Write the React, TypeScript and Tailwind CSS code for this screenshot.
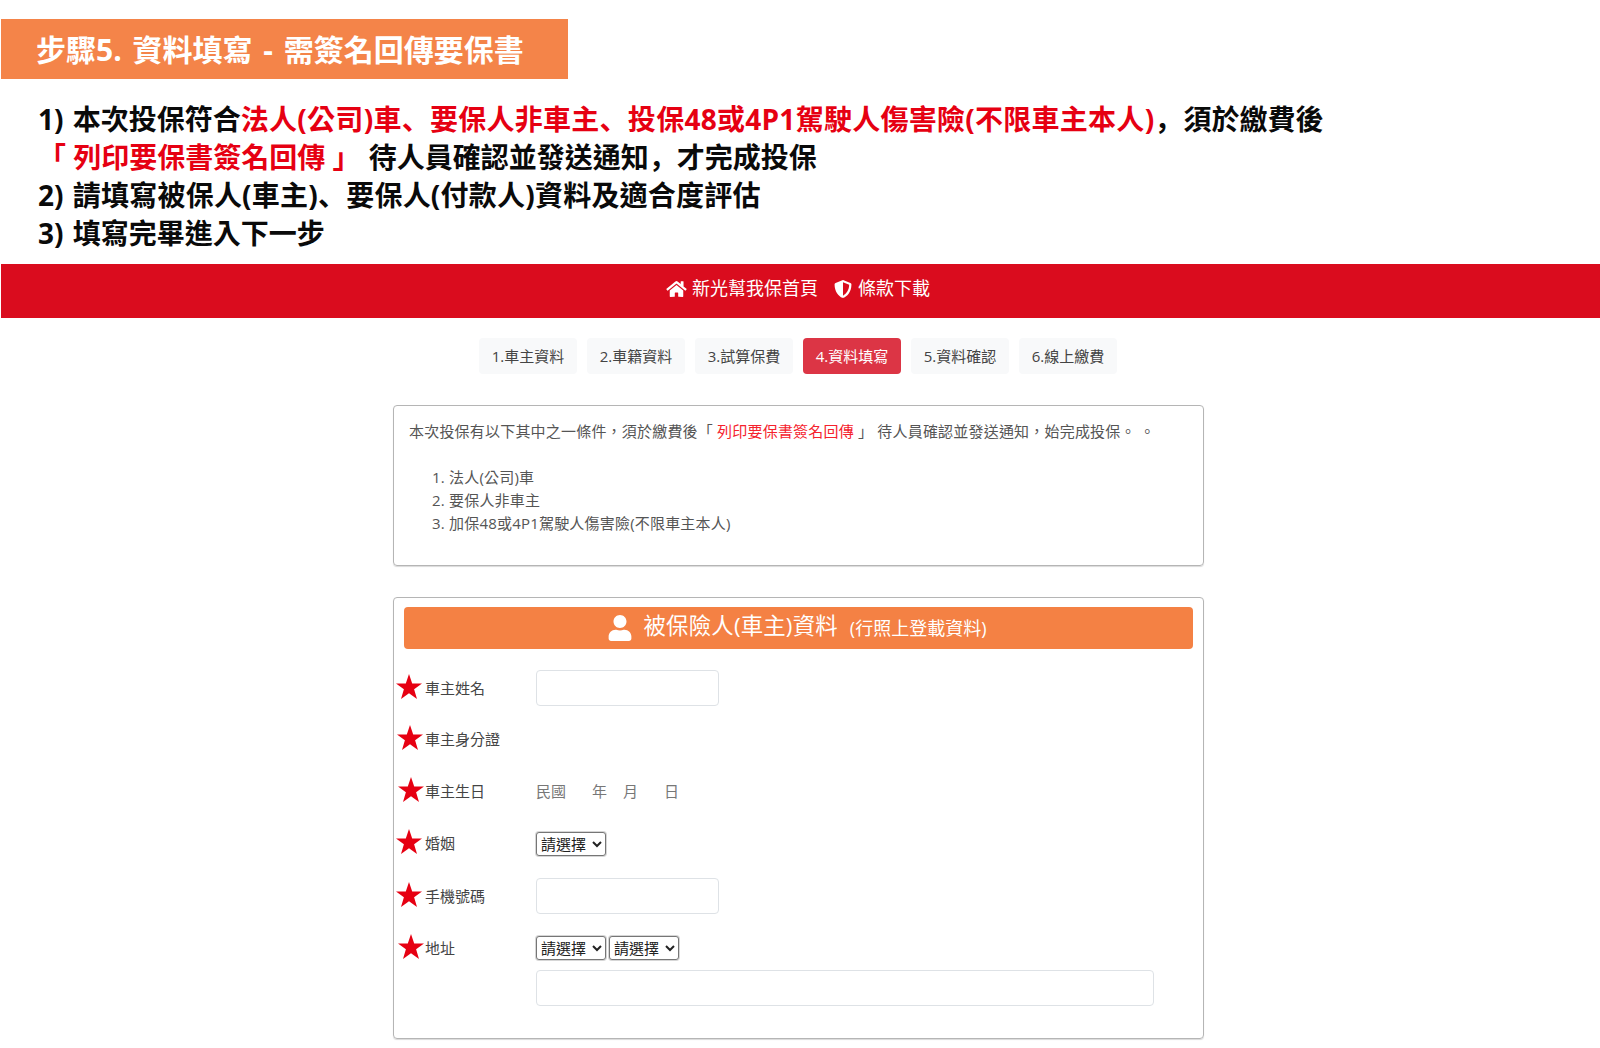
import React from 'react';
import { FaHome, FaShieldAlt, FaUser } from 'react-icons/fa';

const fontStack = 'font-["Open_Sans","Noto_Sans_CJK_TC",sans-serif]';

const tabs = ['1.車主資料', '2.車籍資料', '3.試算保費', '4.資料填寫', '5.資料確認', '6.線上繳費'];

// bottom-left punctuation, as in the headline of the reference
const Punct = ({ children }: { children: React.ReactNode }) => (
  <span className='font-["Noto_Sans_CJK_SC"]'>{children}</span>
);

const Star = ({ className = '' }: { className?: string }) => (
  <svg viewBox="0 0 26 25" className={`h-[25px] w-[26px] ${className}`}>
    <path d="M13 0 L16.2 9.4 L26 9.5 L18.1 15.3 L21 25 L13 19.2 L5 25 L7.9 15.3 L0 9.5 L9.8 9.4 Z" fill="#e60012" />
  </svg>
);

const Row = ({ label, height, starClass, children }: { label: string; height: string; starClass?: string; children?: React.ReactNode }) => (
  <div className={`flex items-center ${height}`}>
    <div className="flex w-[140px] items-center">
      <div className="w-[29px]">
        <Star className={`-translate-y-[2px] ${starClass ?? ''}`} />
      </div>
      <span>{label}</span>
    </div>
    {children}
  </div>
);

const TextInput = ({ className = 'w-[183px]' }: { className?: string }) => (
  <input type="text" className={`h-[36px] rounded border border-[#dee2e6] bg-white ${className}`} />
);

const AreaSelect = () => (
  <select className="h-[24px] w-[70px] rounded-[3px] border border-[#767676] bg-white text-[15px] text-[#222] shadow-[0_0_0_1px_rgba(118,118,118,0.3)]">
    <option>請選擇</option>
  </select>
);

export default function App() {
  return (
    <div className={`min-h-[1048px] bg-white pl-px pt-[19px] ${fontStack}`}>
      <div className="flex h-[60px] w-[567px] items-center bg-[#f48449] pl-[35px] text-[30px] font-bold text-white [word-spacing:3px]">
        步驟5. 資料填寫 - 需簽名回傳要保書
      </div>

      <div className="mt-[20px] pl-[37px] text-[28px] font-bold leading-[38px] text-[#0a0a0a]">
        <p className="h-[38px]">
          <span className="mr-[2px]">1) </span>本次投保符合
          <span className="tracking-[0.27px] text-[#e60012]">
            法人(公司)車<Punct>、</Punct>要保人非車主<Punct>、</Punct>投保48或4P1駕駛人傷害險(不限車主本人)
          </span>
          <Punct>，</Punct>
          <span className="ml-px">須於繳費後</span>
        </p>
        <p className="h-[38px]">
          <span className="text-[#e60012]">「 列印要保書簽名回傳 」</span>
          <span className="ml-px"> 待人員確認並發送通知</span>
          <Punct>，</Punct>才完成投保
        </p>
        <p className="h-[38px]">
          <span className="mr-[2px]">2) </span>
          <span className="tracking-[0.22px]">
            請填寫被保人(車主)<Punct>、</Punct>要保人(付款人)資料及適合度評估
          </span>
        </p>
        <p className="h-[38px] pt-px">
          <span className="mr-[2px]">3) </span>填寫完畢進入下一步
        </p>
      </div>

      <nav className="mt-[13px] flex h-[54px] items-center justify-center gap-[16px] bg-[#da0c1e] pb-[5px] pr-[5px] text-[18px] text-white">
        <a className="flex items-center gap-[5px]">
          <FaHome className="h-[18px] w-[21px]" />
          新光幫我保首頁
        </a>
        <a className="flex items-center gap-[6px]">
          <FaShieldAlt className="h-[18px] w-[18px]" />
          條款下載
        </a>
      </nav>

      <div className="ml-[392px] w-[811px] text-[15px] text-[#555]">
        <ul className="mt-[20px] flex justify-center gap-[10px] pr-px">
          {tabs.map((tab, index) => (
            <li
              key={tab}
              className={`flex h-[36px] w-[98px] items-center justify-center rounded ${
                index === 3 ? 'bg-[#dc3545] text-white' : 'bg-[#f8f9fa] text-[#444]'
              }`}
            >
              {tab}
            </li>
          ))}
        </ul>

        <section className="mt-[31px] h-[161px] rounded border border-[#b5b5b5] px-[15px] pt-[13px] shadow-[0_1px_1px_rgba(0,0,0,0.15)]">
          <p className="leading-[24px] tracking-[0.2px]">
            本次投保有以下其中之一條件，須於繳費後「 <span className="text-[#f5222d]">列印要保書簽名回傳</span> 」 待人員確認並發送通知，始完成投保。 。
          </p>
          <ol className="mt-[23px] list-decimal pl-[40px] leading-[23px] tracking-[0.2px]">
            <li>法人(公司)車</li>
            <li>要保人非車主</li>
            <li>加保48或4P1駕駛人傷害險(不限車主本人)</li>
          </ol>
        </section>

        <section className="mt-[31px] h-[442px] rounded border border-[#b5b5b5] pl-[2px] pt-[9px] shadow-[0_1px_1px_rgba(0,0,0,0.15)]">
          <div className="ml-[8px] mr-[10px] flex h-[42px] items-center justify-center rounded bg-[#f48144] pr-[4px] text-white">
            <FaUser className="mr-[11px] h-[26px] w-[26px]" />
            <span className="mb-[4px] text-[22.4px] tracking-[0.2px]">被保險人(車主)資料</span>
            <span className="ml-[12px] text-[18px]">(行照上登載資料)</span>
          </div>

          <div className="mt-[13px] text-[#444]">
            <Row label="車主姓名" height="h-[52px]">
              <TextInput />
            </Row>
            <Row label="車主身分證" height="h-[51px]" starClass="ml-px" />
            <Row label="車主生日" height="h-[52px]" starClass="ml-[2px]">
              <div className="flex text-[#777]">
                <span>民國</span>
                <span className="ml-[26px]">年</span>
                <span className="ml-[16px]">月</span>
                <span className="ml-[26px]">日</span>
              </div>
            </Row>
            <Row label="婚姻" height="h-[53px]">
              <AreaSelect />
            </Row>
            <Row label="手機號碼" height="h-[52px]">
              <TextInput />
            </Row>
            <div className="flex pt-[14px]">
              <div className="flex h-[24px] w-[140px] items-center">
                <div className="w-[29px]">
                  <Star className="ml-[2px] -translate-y-[2px]" />
                </div>
                <span>地址</span>
              </div>
              <div>
                <div className="flex gap-[3px]">
                  <AreaSelect />
                  <AreaSelect />
                </div>
                <TextInput className="mt-[10px] block w-[618px]" />
              </div>
            </div>
          </div>
        </section>
      </div>
    </div>
  );
}
